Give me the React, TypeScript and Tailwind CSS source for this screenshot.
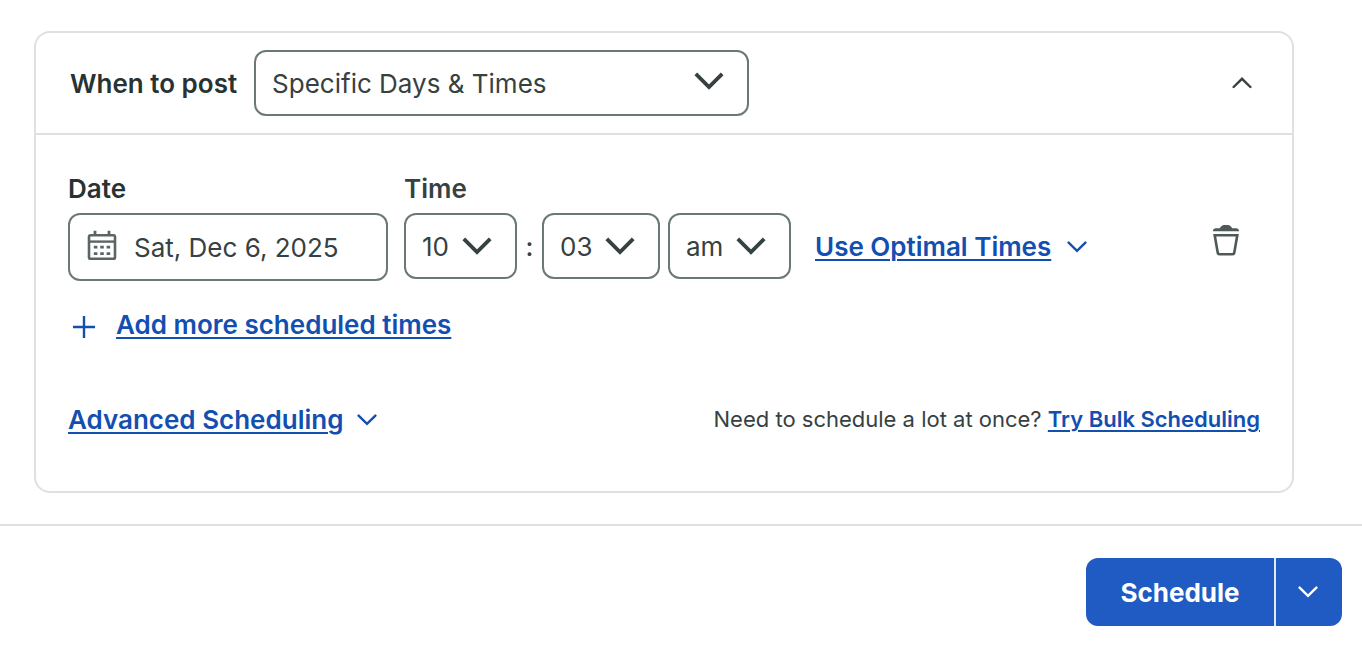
import { useId, useState } from 'react'
import type { ReactNode } from 'react'

type ChevronProps = { className: string; up?: boolean }

function BoldChevron({ className }: { className: string }) {
  return (
    <svg viewBox="0 0 30 18" className={className} fill="none" stroke="currentColor" strokeWidth="3.8" aria-hidden="true">
      <path d="M1.8 1.8 15 15 28.2 1.8" />
    </svg>
  )
}

function ThinChevron({ className, up = false }: ChevronProps) {
  return (
    <svg
      viewBox="0 0 20 12"
      className={className}
      fill="none"
      stroke="currentColor"
      strokeWidth="2.4"
      strokeLinecap="round"
      aria-hidden="true"
    >
      <path d={up ? 'M1.6 10 10 1.8l8.4 8.2' : 'M1.6 1.6 10 9.9l8.4-8.3'} />
    </svg>
  )
}

function CalendarIcon() {
  return (
    <svg viewBox="0 0 30 32" className="h-8 w-[30px]" fill="none" stroke="currentColor" aria-hidden="true">
      <rect x="2" y="5.3" width="26" height="23.5" rx="1.6" strokeWidth="2.6" />
      <path d="M2 11.6h26" strokeWidth="2.4" />
      <path d="M8 .8v4.400M22 .8v4.400" strokeWidth="2.8" />
      <path d="M6.8 17.2h3.600M13.200 17.2h3.600M19.600 17.2h3.600M6.800 23.6h3.600M13.200 23.6h3.600M19.600 23.6h3.600" strokeWidth="2.8" />
    </svg>
  )
}

function TrashIcon() {
  return (
    <svg viewBox="0 0 26 31" className="h-[31px] w-[26px]" aria-hidden="true">
      <path
        d="M0 6.2V5.400C.4 4 1.400 3.300 2.800 3.300h4C7.800 1.300 9.200 0 11.200 0h3.600c2 0 3.400 1.300 4.400 3.300h4c1.400 0 2.400.7 2.800 2.100v.8z"
        fill="currentColor"
      />
      <path
        d="M1.700 10.200h22.600l-3 17.300c-.2 1.300-.9 1.800-2.200 1.800H6.900c-1.300 0-2-.5-2.200-1.800z"
        fill="none"
        stroke="currentColor"
        strokeWidth="2.6"
      />
    </svg>
  )
}

type PickerProps = { id?: string; label?: string; options: string[]; className: string; iconClassName: string }

function Picker({ id, label, options, className, iconClassName }: PickerProps) {
  return (
    <div className={`relative h-[66px] ${className}`}>
      <select
        id={id}
        aria-label={label}
        className="h-full w-full appearance-none rounded-xl border-2 border-[#6a7977] bg-white pt-[2px] pr-12 pl-4 text-[26px]"
      >
        {options.map((option) => (
          <option key={option}>{option}</option>
        ))}
      </select>
      <BoldChevron className={`pointer-events-none absolute h-[18px] w-[30px] ${iconClassName}`} />
    </div>
  )
}

function TextLink({ children }: { children: ReactNode }) {
  return (
    <a href="#" className="font-semibold text-[#134fb0] underline decoration-2 underline-offset-3">
      {children}
    </a>
  )
}

export default function App() {
  const whenId = useId()
  const dateId = useId()
  const hourId = useId()
  const [open, setOpen] = useState(true)

  return (
    <div className="bg-white font-['Inter',sans-serif] text-[26px] leading-8 text-[#364141]">
      <main className="pt-[31px] pr-[68px] pb-[31px] pl-[34px]">
        <section className="rounded-2xl border-2 border-[#dfe0e0]">
          <header className="flex items-center border-b-2 border-[#dfe0e0] py-[17px] pr-10 pl-[34px]">
            <label htmlFor={whenId} className="mr-[17px] pt-[2px] font-semibold whitespace-nowrap text-[#273333]">
              When to post
            </label>
            <Picker
              id={whenId}
              options={['Specific Days & Times', 'Immediately']}
              className="w-[495px]"
              iconClassName="top-[22px] right-[25px]"
            />
            <button type="button" aria-label="Toggle schedule" onClick={() => setOpen(!open)} className="ml-auto">
              <ThinChevron up={open} className="h-3 w-5" />
            </button>
          </header>
          {open && (
            <div className="px-8 pt-[38px] pb-[55px]">
              <div className="flex items-start">
                <div className="mr-4 w-80">
                  <label htmlFor={dateId} className="mb-2 block font-semibold text-[#273333]">
                    Date
                  </label>
                  <div className="relative">
                    <span className="pointer-events-none absolute top-[17px] left-[19px] text-[#5a6665]">
                      <CalendarIcon />
                    </span>
                    <input
                      id={dateId}
                      type="text"
                      defaultValue="Sat, Dec 6, 2025"
                      className="h-[68px] w-full rounded-xl border-2 border-[#6a7977] bg-white pr-4 pl-16"
                    />
                  </div>
                </div>
                <div>
                  <label htmlFor={hourId} className="mb-2 block font-semibold">
                    Time
                  </label>
                  <div className="flex items-center">
                    <Picker id={hourId} options={['10', '11', '12']} className="w-[113px]" iconClassName="top-6 right-[25px]" />
                    <span className="w-[25px] pt-[2px] text-center font-medium">:</span>
                    <Picker label="Minutes" options={['03', '04', '05']} className="w-[118px]" iconClassName="top-6 right-[25px]" />
                    <Picker
                      label="Morning or afternoon"
                      options={['am', 'pm']}
                      className="ml-2 w-[123px]"
                      iconClassName="top-6 right-[25px]"
                    />
                  </div>
                </div>
                <div className="mt-10 ml-6 flex h-[68px] flex-1 items-center text-[#134fb0]">
                  <TextLink>Use Optimal Times</TextLink>
                  <ThinChevron className="ml-4 h-3 w-5" />
                  <button type="button" aria-label="Delete time" className="mr-[21px] mb-[14px] ml-auto text-[#4e5a5a]">
                    <TrashIcon />
                  </button>
                </div>
              </div>
              <div className="mt-7 flex items-center gap-5 pl-1 text-[#134fb0]">
                <svg viewBox="0 0 24 28" className="h-7 w-6" stroke="currentColor" strokeWidth="2.4" aria-hidden="true">
                  <path d="M1 16h22M12 5v22" />
                </svg>
                <TextLink>Add more scheduled times</TextLink>
              </div>
              <div className="mt-[63px] flex items-start justify-between">
                <div className="flex items-center gap-[14px] text-[#134fb0]">
                  <TextLink>Advanced Scheduling</TextLink>
                  <ThinChevron className="h-3 w-5" />
                </div>
                <p className="text-[22px] leading-[30px]">
                  Need to schedule a lot at once? <TextLink>Try Bulk Scheduling</TextLink>
                </p>
              </div>
            </div>
          )}
        </section>
      </main>
      <footer className="flex justify-end border-t-2 border-[#dfe0e0] px-5 pt-8 pb-6">
        <div className="flex h-[68px] overflow-hidden rounded-xl bg-[#205ac3] text-white">
          <button type="button" className="w-[188px] pt-[2px] font-bold">
            Schedule
          </button>
          <button
            type="button"
            aria-label="More scheduling options"
            className="flex w-[68px] items-center justify-center border-l-2 border-[#e3e8f2] pr-[2px]"
          >
            <ThinChevron className="h-3 w-5" />
          </button>
        </div>
      </footer>
    </div>
  )
}
